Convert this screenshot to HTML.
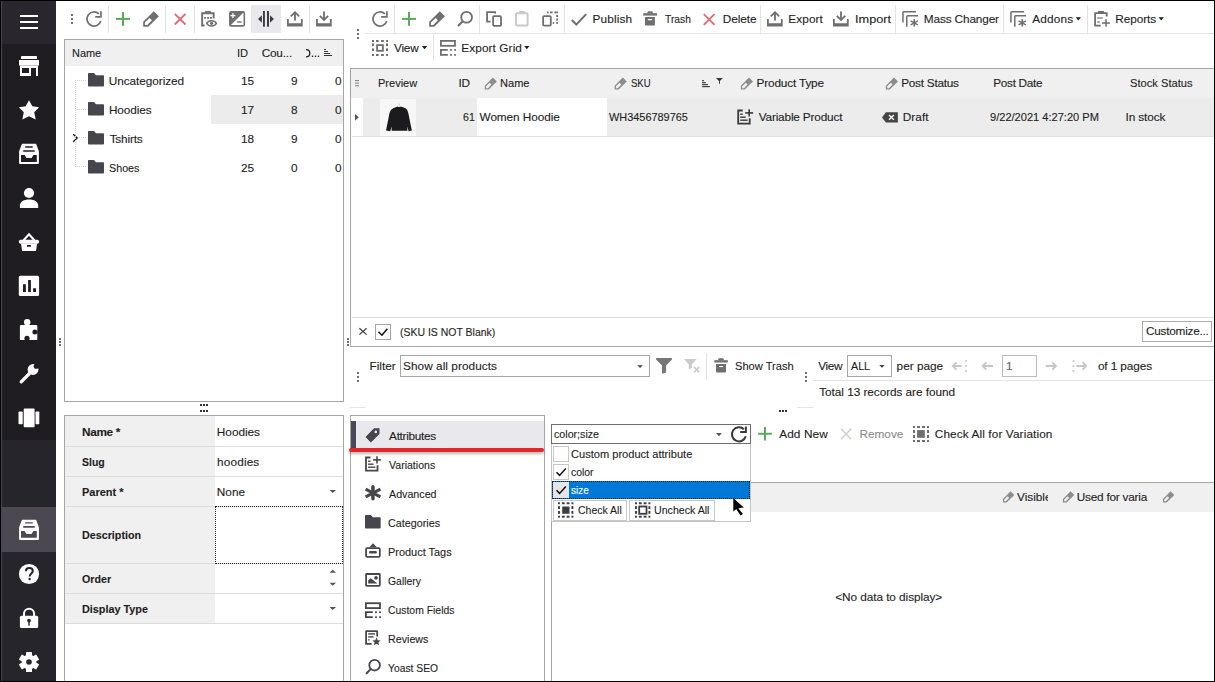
<!DOCTYPE html>
<html><head><meta charset="utf-8">
<style>
*{margin:0;padding:0;box-sizing:border-box}
html,body{width:1215px;height:682px;overflow:hidden;background:#fff}
body{position:relative;font-family:"Liberation Sans",sans-serif;font-size:11.8px;color:#1e1e1e}
.a{position:absolute}
.t{position:absolute;white-space:nowrap;line-height:12px;height:12px;-webkit-text-stroke:0.12px currentColor}
.b{font-weight:bold}
svg{position:absolute;overflow:visible}
.ic{fill:#6f6f6f}
.sb svg{fill:#fff}
</style></head><body>

<!-- SIDEBAR -->
<div class="a sb" style="left:0;top:0;width:56px;height:682px;background:#1f1d22">
  <div class="a" style="left:0;top:0;width:56px;height:44px;background:#29272d"></div>
  <div class="a" style="left:0;top:440px;width:56px;height:242px;background:#27252c"></div>
  <div class="a" style="left:0;top:507px;width:56px;height:45px;background:#4b4852"></div>
  <div class="a" style="left:0;top:0;width:1px;height:682px;background:#000"></div>
  <div class="a" style="left:1px;top:0;width:1px;height:682px;background:#4a4850"></div>
</div>

<!-- LEFT TOOLBAR -->
<div class="a" style="left:108px;top:6px;width:1px;height:27px;background:#e3e3e3"></div>
<div class="a" style="left:165px;top:6px;width:1px;height:27px;background:#e3e3e3"></div>
<div class="a" style="left:194px;top:6px;width:1px;height:27px;background:#e3e3e3"></div>
<div class="a" style="left:251px;top:5px;width:30px;height:28px;background:#e9e9ed"></div>
<div class="a" style="left:309px;top:6px;width:1px;height:27px;background:#e3e3e3"></div>

<!-- LEFT GRID -->
<div class="a" style="left:64px;top:39px;width:280px;height:363px;border:1px solid #a6a6a6"></div>
<div class="a" style="left:65px;top:40px;width:278px;height:26px;background:#f0f0f0"></div>
<div class="a" style="left:211px;top:95px;width:132px;height:29px;background:#ececec"></div>
<div class="t" style="left:71.81px;top:47px;transform:scaleX(0.926);transform-origin:0 0">Name</div>
<div class="t" style="left:236.6px;top:47px;transform:scaleX(0.943);transform-origin:0 0">ID</div>
<div class="t" style="left:261.65px;top:47px;letter-spacing:-0.18px">Cou...</div>

<div class="t" style="left:108.75px;top:75px;letter-spacing:-0.06px">Uncategorized</div>
<div class="t" style="left:108.9px;top:104px;letter-spacing:-0.09px">Hoodies</div>
<div class="t" style="left:109.65px;top:133px;letter-spacing:-0.17px">Tshirts</div>
<div class="t" style="left:109.2px;top:162px;transform:scaleX(0.911);transform-origin:0 0">Shoes</div>
<div class="t" style="left:241px;top:75px">15</div>
<div class="t" style="left:241px;top:104px">17</div>
<div class="t" style="left:241px;top:133px">18</div>
<div class="t" style="left:241px;top:162px">25</div>
<div class="t" style="left:291px;top:75px">9</div>
<div class="t" style="left:291px;top:104px">8</div>
<div class="t" style="left:291px;top:133px">9</div>
<div class="t" style="left:291px;top:162px">0</div>
<div class="t" style="left:335px;top:75px">0</div>
<div class="t" style="left:335px;top:104px">0</div>
<div class="t" style="left:335px;top:133px">0</div>
<div class="t" style="left:335px;top:162px">0</div>

<!-- FORM -->
<div class="a" style="left:64px;top:415px;width:280px;height:280px;border:1px solid #a6a6a6"></div>
<div class="a" style="left:65px;top:416px;width:150px;height:207px;background:#f0f0f0"></div>
<div class="a" style="left:65px;top:446px;width:278px;height:1px;background:#dcdcdc"></div>
<div class="a" style="left:65px;top:476px;width:278px;height:1px;background:#dcdcdc"></div>
<div class="a" style="left:65px;top:506px;width:278px;height:1px;background:#dcdcdc"></div>
<div class="a" style="left:65px;top:563px;width:278px;height:1px;background:#dcdcdc"></div>
<div class="a" style="left:65px;top:593px;width:278px;height:1px;background:#dcdcdc"></div>
<div class="a" style="left:65px;top:623px;width:278px;height:1px;background:#dcdcdc"></div>
<div class="a" style="left:215px;top:506px;width:128px;height:58px;border:1px dotted #222"></div>
<div class="t b" style="left:81.95px;top:426px;letter-spacing:-0.3px">Name *</div>
<div class="t b" style="left:82.12px;top:456px;transform:scaleX(0.889);transform-origin:0 0">Slug</div>
<div class="t b" style="left:82.0px;top:486px;transform:scaleX(0.93);transform-origin:0 0">Parent *</div>
<div class="t b" style="left:82.01px;top:529px;transform:scaleX(0.91);transform-origin:0 0">Description</div>
<div class="t b" style="left:81.89px;top:573px;transform:scaleX(0.905);transform-origin:0 0">Order</div>
<div class="t b" style="left:82.0px;top:603px;transform:scaleX(0.917);transform-origin:0 0">Display Type</div>
<div class="t" style="left:216.85px;top:426px;letter-spacing:-0.02px">Hoodies</div>
<div class="t" style="left:217.1px;top:456px;letter-spacing:0.14px">hoodies</div>
<div class="t" style="left:216.85px;top:486px;letter-spacing:-0.02px">None</div>

<!-- RIGHT TOOLBAR -->
<div class="a" style="left:365px;top:33px;width:849px;height:1px;background:#e3e3e3"></div>
<div class="a" style="left:394px;top:5px;width:1px;height:28px;background:#e3e3e3"></div>
<div class="a" style="left:479px;top:5px;width:1px;height:28px;background:#e3e3e3"></div>
<div class="a" style="left:564px;top:5px;width:1px;height:28px;background:#e3e3e3"></div>
<div class="a" style="left:760px;top:5px;width:1px;height:28px;background:#e3e3e3"></div>
<div class="a" style="left:895px;top:5px;width:1px;height:28px;background:#e3e3e3"></div>
<div class="a" style="left:1003px;top:5px;width:1px;height:28px;background:#e3e3e3"></div>
<div class="a" style="left:1087px;top:5px;width:1px;height:28px;background:#e3e3e3"></div>
<div class="a" style="left:433px;top:34px;width:1px;height:27px;background:#e3e3e3"></div>
<div class="t" style="left:592.55px;top:13px;letter-spacing:0.12px">Publish</div>
<div class="t" style="left:665.28px;top:13px;transform:scaleX(0.87);transform-origin:0 0">Trash</div>
<div class="t" style="left:722.75px;top:13px;letter-spacing:-0.08px">Delete</div>
<div class="t" style="left:788.35px;top:13px;letter-spacing:0.09px">Export</div>
<div class="t" style="left:854.73px;top:13px;transform:scaleX(1.08);transform-origin:0 0">Import</div>
<div class="t" style="left:923.75px;top:13px;letter-spacing:-0.13px">Mass Changer</div>
<div class="t" style="left:1032.35px;top:13px;letter-spacing:0.15px">Addons</div>
<div class="t" style="left:1115.35px;top:13px;letter-spacing:-0.1px">Reports</div>
<div class="t" style="left:394.0px;top:42px;letter-spacing:-0.23px">View</div>
<div class="t" style="left:461.35px;top:42px;letter-spacing:0.09px">Export Grid</div>

<!-- PRODUCT GRID -->
<div class="a" style="left:350px;top:68px;width:864px;height:279px;border:1px solid #a6a6a6;border-right:none"></div>
<div class="a" style="left:351px;top:69px;width:863px;height:29px;background:#f0f0f0"></div>
<div class="a" style="left:363px;top:98px;width:851px;height:38px;background:#ececec"></div>
<div class="a" style="left:477px;top:98px;width:130px;height:38px;background:#fff"></div>
<div class="a" style="left:352px;top:136px;width:862px;height:1px;background:#e0e0e0"></div>
<div class="t" style="left:377.61px;top:77px;transform:scaleX(0.933);transform-origin:0 0">Preview</div>
<div class="t" style="left:458.5px;top:77px;letter-spacing:-0.25px">ID</div>
<div class="t" style="left:500.41px;top:77px;transform:scaleX(0.937);transform-origin:0 0">Name</div>
<div class="t" style="left:631.28px;top:77px;transform:scaleX(0.809);transform-origin:0 0">SKU</div>
<div class="t" style="left:756.55px;top:77px;letter-spacing:-0.16px">Product Type</div>
<div class="t" style="left:901.2px;top:77px;letter-spacing:-0.25px">Post Status</div>
<div class="t" style="left:993.2px;top:77px;letter-spacing:-0.29px">Post Date</div>
<div class="t" style="left:1130.07px;top:77px;transform:scaleX(0.945);transform-origin:0 0">Stock Status</div>
<div class="t" style="left:462.55px;top:111px;transform:scaleX(0.898);transform-origin:0 0">61</div>
<div class="t" style="left:479.55px;top:111px;letter-spacing:-0.08px">Women Hoodie</div>
<div class="t" style="left:609.15px;top:111px;transform:scaleX(0.925);transform-origin:0 0">WH3456789765</div>
<div class="t" style="left:758.7px;top:111px;letter-spacing:-0.17px">Variable Product</div>
<div class="t" style="left:902.75px;top:111px;letter-spacing:0.07px">Draft</div>
<div class="t" style="left:989.72px;top:111px;transform:scaleX(0.938);transform-origin:0 0">9/22/2021 4:27:20 PM</div>
<div class="t" style="left:1125.55px;top:111px;letter-spacing:-0.12px">In stock</div>

<!-- FILTER PANEL -->
<div class="a" style="left:352px;top:317px;width:862px;height:1px;background:#e0e0e0"></div>
<div class="a" style="left:375px;top:324px;width:16px;height:16px;border:1px solid #a6a6a6;background:#fff"></div>
<div class="t" style="left:399.87px;top:326px;transform:scaleX(0.888);transform-origin:0 0">(SKU IS NOT Blank)</div>
<div class="a" style="left:1142px;top:321px;width:70px;height:21px;border:1px solid #adadad;background:#fff"></div>
<div class="t" style="left:1145.95px;top:325px;letter-spacing:-0.24px">Customize...</div>

<!-- FILTER TOOLBAR -->
<div class="t" style="left:369.55px;top:360px">Filter</div>
<div class="a" style="left:400px;top:355px;width:250px;height:22px;border:1px solid #a6a6a6"></div>
<div class="t" style="left:403.05px;top:360px;letter-spacing:0.05px">Show all products</div>
<div class="a" style="left:706px;top:353px;width:1px;height:27px;background:#e3e3e3"></div>
<div class="t" style="left:735.22px;top:360px;transform:scaleX(0.942);transform-origin:0 0">Show Trash</div>
<div class="t" style="left:818.2px;top:360px;letter-spacing:-0.3px">View</div>
<div class="a" style="left:847px;top:355px;width:45px;height:22px;border:1px solid #a6a6a6"></div>
<div class="t" style="left:850.5px;top:360px;transform:scaleX(0.906);transform-origin:0 0">ALL</div>
<div class="t" style="left:896.6px;top:360px">per page</div>
<div class="a" style="left:1002px;top:355px;width:35px;height:22px;border:1px solid #bdbdbd"></div>
<div class="t" style="left:1006px;top:360px;color:#666">1</div>
<div class="t" style="left:1097.9px;top:360px;letter-spacing:-0.1px">of 1 pages</div>
<div class="a" style="left:813px;top:380px;width:401px;height:1px;background:#e3e3e3"></div>
<div class="t" style="left:819.25px;top:386px;letter-spacing:-0.05px">Total 13 records are found</div>

<!-- NAV PANEL -->
<div class="a" style="left:350px;top:415px;width:195px;height:280px;border:1px solid #a6a6a6"></div>
<div class="a" style="left:351px;top:421px;width:193px;height:29px;background:#e9e9ed"></div>
<div class="a" style="left:351px;top:421px;width:5px;height:28px;background:#4a4955"></div>
<div class="t" style="left:389.05px;top:430px;letter-spacing:-0.29px">Attributes</div>
<div class="t" style="left:389.03px;top:459px;transform:scaleX(0.895);transform-origin:0 0">Variations</div>
<div class="t" style="left:389.04px;top:488px;transform:scaleX(0.906);transform-origin:0 0">Advanced</div>
<div class="t" style="left:388.04px;top:517px;transform:scaleX(0.912);transform-origin:0 0">Categories</div>
<div class="t" style="left:387.8px;top:546px;transform:scaleX(0.927);transform-origin:0 0">Product Tags</div>
<div class="t" style="left:388.06px;top:575px;transform:scaleX(0.884);transform-origin:0 0">Gallery</div>
<div class="t" style="left:388.06px;top:604px;transform:scaleX(0.881);transform-origin:0 0">Custom Fields</div>
<div class="t" style="left:387.82px;top:633px;transform:scaleX(0.906);transform-origin:0 0">Reviews</div>
<div class="t" style="left:388.28px;top:662px;transform:scaleX(0.874);transform-origin:0 0">Yoast SEO</div>
<div class="a" style="left:349px;top:448px;width:195px;height:4px;background:#e4262a;border-radius:2px;box-shadow:0 2px 3px rgba(0,0,0,.28)"></div>

<!-- ATTRIBUTES -->
<div class="a" style="left:551px;top:482px;width:663px;height:210px;border:1px solid #a6a6a6;border-right:none"></div>
<div class="a" style="left:552px;top:483px;width:662px;height:29px;background:#f0f0f0"></div>
<div class="t" style="left:779.15px;top:428px;letter-spacing:0.13px">Add New</div>
<div class="t" style="left:859.55px;top:428px;color:#8c8c8c;letter-spacing:-0.03px">Remove</div>
<div class="t" style="left:934.8px;top:428px;letter-spacing:0.11px">Check All for Variation</div>
<div class="t" style="left:1017px;top:491px;width:31px;overflow:hidden">Visible</div>
<div class="t" style="left:1076.75px;top:491px;letter-spacing:-0.23px">Used for varia</div>
<div class="t" style="left:835.2px;top:591px;letter-spacing:-0.06px">&lt;No data to display&gt;</div>

<!-- COMBO + POPUP -->
<div class="a" style="left:551px;top:443px;width:200px;height:79px;border:1px solid #c4c4c4;background:#fff"></div>
<div class="a" style="left:551px;top:424px;width:200px;height:20px;border:1px solid #6e6e6e;background:#fff"></div>
<div class="t" style="left:553.55px;top:428px;transform:scaleX(0.904);transform-origin:0 0">color;size</div>
<div class="a" style="left:553px;top:446px;width:16px;height:16px;border:1px solid #c8c8c8;background:#fff"></div>
<div class="a" style="left:553px;top:464px;width:16px;height:16px;border:1px solid #c8c8c8;background:#fff"></div>
<div class="t" style="left:571.18px;top:448px;transform:scaleX(0.939);transform-origin:0 0">Custom product attribute</div>
<div class="t" style="left:571.44px;top:466px;transform:scaleX(0.883);transform-origin:0 0">color</div>
<div class="a" style="left:552px;top:481px;width:198px;height:18px;background:#0078d7;border:1px dotted #222"></div>
<div class="a" style="left:553px;top:482px;width:16px;height:16px;background:#e6e6ea"></div>
<div class="t" style="left:571.45px;top:484px;color:#fff;transform:scaleX(0.849);transform-origin:0 0">size</div>
<div class="a" style="left:553px;top:500px;width:74px;height:21px;border:1px solid #c8c8c8;background:#fff"></div>
<div class="a" style="left:629px;top:500px;width:86px;height:21px;border:1px solid #c8c8c8;background:#fff"></div>
<div class="t" style="left:578.02px;top:504px;transform:scaleX(0.89);transform-origin:0 0">Check All</div>
<div class="t" style="left:654.44px;top:504px;transform:scaleX(0.9);transform-origin:0 0">Uncheck All</div>


<!-- ICON OVERLAY -->
<svg width="1215" height="682" style="left:0;top:0">
<defs>
 <g id="refresh"><path d="M12.9 2.93A7.05 7.05 0 1 0 14.78 9.94M9.2 5.8H14.9V0.3" fill="none" stroke-width="1.7"/></g>
 <g id="pencil" stroke="none"><path fill-rule="evenodd" d="M0.2 15.7V10.8L10.8 0.2L15.9 5.3L5.3 15.7ZM1.9 14V11.5L6.6 6.9L8.9 9.2L4.3 14Z"/></g>
 <g id="plus" stroke="none"><rect x="6" y="0.1" width="2" height="13.7"/><rect x="0" y="5.9" width="14" height="2"/></g>
 <g id="xmark"><path d="M0.6 0.6L11.3 11.3M11.3 0.6L0.6 11.3" fill="none" stroke-width="1.9"/></g>
 <g id="upload"><path stroke="none" d="M0 7.7V15.1H15.7V7.7H13.9V11.8H1.8V7.7Z"/><rect stroke="none" x="7.1" y="1" width="1.8" height="8.2"/><path d="M3.8 4.9L8 0.8L12.2 4.9" fill="none" stroke-width="1.8"/></g>
 <g id="download"><path stroke="none" d="M0 7.7V15.1H15.7V7.7H13.9V11.8H1.8V7.7Z"/><rect stroke="none" x="7.1" y="0" width="1.8" height="8.4"/><path d="M3.8 4.5L8 8.6L12.2 4.5" fill="none" stroke-width="1.8"/></g>
 <g id="massch"><path d="M0.75 11.6V1.6Q0.75 0.75 1.6 0.75H13.8M4.6 15.7V5.6Q4.6 4.8 5.4 4.8H15.9" fill="none" stroke-width="1.5"/><rect stroke="none" x="11.2" y="8.1" width="1.7" height="7.4"/><path d="M8.4 9.9L15.7 13.8M8.4 13.8L15.7 9.9" fill="none" stroke-width="1.4"/></g>
 <g id="exgrid"><rect x="0.9" y="0.9" width="14.1" height="4.9" fill="none" stroke-width="1.8"/><path d="M7.8 9.9H0.9V14.8H7.8" fill="none" stroke-width="1.8"/><g stroke="none"><rect x="10.1" y="9" width="1.8" height="1.8"/><rect x="14.1" y="9" width="1.8" height="1.8"/><rect x="10.1" y="14" width="1.8" height="1.8"/><rect x="14.1" y="14" width="1.8" height="1.8"/></g></g>
 <g id="varprod"><path d="M5.5 1.2H1V14.3H12.5V9" fill="none" stroke-width="1.8"/><g stroke="none"><rect x="3" y="4.2" width="2.5" height="1.4"/><rect x="3" y="7.2" width="5.5" height="1.4"/><rect x="3" y="10.2" width="7.4" height="1.4"/><rect x="11.2" y="0" width="1.6" height="7.2"/><rect x="8.1" y="2.8" width="7.8" height="1.6"/></g></g>
 <g id="folder" stroke="none"><path d="M0 0.8Q0 0 0.8 0H6L8 2.2H15.2Q16 2.2 16 3V12.7Q16 13.5 15.2 13.5H0.8Q0 13.5 0 12.7Z"/></g>
 <g id="dashsq" stroke="none"><rect x="0" y="0" width="2" height="2"/><rect x="4" y="0" width="3" height="2"/><rect x="9" y="0" width="3" height="2"/><rect x="14" y="0" width="2" height="2"/><rect x="0" y="14" width="2" height="2"/><rect x="4" y="14" width="3" height="2"/><rect x="9" y="14" width="3" height="2"/><rect x="14" y="14" width="2" height="2"/><rect x="0" y="4" width="2" height="3"/><rect x="0" y="9" width="2" height="3"/><rect x="14" y="4" width="2" height="3"/><rect x="14" y="9" width="2" height="3"/></g>
</defs>

<!-- sidebar icons -->
<g fill="#fff">
 <rect x="20" y="15" width="18" height="2"/><rect x="20" y="21" width="18" height="2"/><rect x="20" y="27" width="18" height="2"/>
 <rect x="21" y="56" width="16" height="3" rx="0.6"/>
 <path d="M19 60H39V64.8Q39 65.8 38 65.8H20Q19 65.8 19 64.8Z"/>
 <path fill-rule="evenodd" d="M20 66H38V76H36V68H31V76H20ZM22 68H29V73H22Z"/>
 <path d="M29 100.2L32.3 106.3L39.1 107.3L34.2 112.2L35.7 119.4L29 116.3L22.3 119.4L23.8 112.2L18.9 107.3L25.7 106.3Z"/>
 <path fill-rule="evenodd" d="M22 143.8H36.1L38.9 151.3V163.1Q38.9 164.1 37.9 164.1H20.1Q19.1 164.1 19.1 163.1V151.3ZM25.2 146.3H32.7V147.7H25.2ZM23.2 150.2H34.7V151.8H23.2ZM21 155.1H24.6L26.5 158.1H31.6L33.4 155.1H36.8V161.9H21Z"/>
 <circle cx="29" cy="193" r="5.1"/>
 <path d="M19.9 208.1V205.6C19.9 201.6 24 199.5 29 199.5C34 199.5 38.2 201.6 38.2 205.6V208.1Z"/>
 <path d="M23.6 240.2L29 234.2L34.4 240.2" fill="none" stroke="#fff" stroke-width="2.1"/>
 <rect x="18.8" y="239.8" width="20.3" height="3.9" rx="1.9"/>
 <path fill-rule="evenodd" d="M21 243.5H37.1L36 251H22.1ZM27 245H30.9V246.8H27Z"/>
 <path fill-rule="evenodd" d="M20.3 275.8H37.6Q39.1 275.8 39.1 277.3V294.6Q39.1 296.1 37.6 296.1H20.3Q18.8 296.1 18.8 294.6V277.3Q18.8 275.8 20.3 275.8ZM23 284.2V291.9H25.9V284.2ZM28.1 280V291.9H30.9V280ZM33.1 288.2V291.9H36V288.2Z"/>
 <rect x="19.9" y="324.9" width="17.4" height="15.2" rx="1.2"/>
 <circle cx="27.2" cy="322.3" r="3.2"/>
 <circle cx="33" cy="369.5" r="5.4"/>
 <path d="M21.2 381.8L29.5 373.5" stroke="#fff" stroke-width="3.3" stroke-linecap="round"/>
 <rect x="23.7" y="408.5" width="10.9" height="18.7" rx="1"/>
 <rect x="18.5" y="411.5" width="4.2" height="12.8" rx="0.8"/>
 <rect x="35.5" y="411.5" width="3.8" height="12.8" rx="0.8"/>
 <path fill-rule="evenodd" d="M22 519.7H36.1L38.9 527.2V539Q38.9 540 37.9 540H20.1Q19.1 540 19.1 539V527.2ZM25.2 522.2H32.7V523.6H25.2ZM23.2 526.1H34.7V527.7H23.2ZM21 531H24.6L26.5 534H31.6L33.4 531H36.8V537.8H21Z"/>
 <circle cx="29" cy="574" r="10.1"/>
 <rect x="19.9" y="615.8" width="18.3" height="12.3" rx="1.5"/>
 <path d="M24 616V613.8A5.05 5.05 0 0 1 34.1 613.8V616" fill="none" stroke="#fff" stroke-width="2"/>
 <g transform="translate(29 662)"><circle r="7.4"/><rect x="-3" y="-10" width="6" height="20" rx="0.6"/><rect x="-3" y="-10" width="6" height="20" rx="0.6" transform="rotate(60)"/><rect x="-3" y="-10" width="6" height="20" rx="0.6" transform="rotate(120)"/></g>
</g>
<g fill="#1f1d22">
 <circle cx="34.9" cy="332" r="2.5"/><rect x="36" y="331.5" width="2" height="1"/>
 <circle cx="27" cy="338.3" r="2.6"/><rect x="26.5" y="339" width="1" height="2"/>
 <circle cx="36.3" cy="366.2" r="2.6"/>
</g>
<g fill="#27252c">
 <path d="M25.9 571.2C25.9 569 27.3 568 29.3 568C31.3 568 32.8 569.2 32.8 570.9C32.8 573.4 29.6 573.6 29.6 576.6" fill="none" stroke="#27252c" stroke-width="2"/>
 <circle cx="29.6" cy="579" r="1.2"/>
 <circle cx="29" cy="620.6" r="1.9"/><rect x="28.3" y="621" width="1.4" height="4.7"/>
 <circle cx="29" cy="662" r="2.8"/>
</g>

<!-- left toolbar icons -->
<g fill="#6f6f6f" stroke="#6f6f6f">
 <g stroke="none"><rect x="71" y="14" width="2" height="2"/><rect x="71" y="18" width="2" height="2"/><rect x="71" y="22" width="2" height="2"/></g>
 <use href="#refresh" transform="translate(86 11)"/>
 <use href="#pencil" transform="translate(143 11)"/>
 <g stroke="none">
  <path d="M3.6 14.55H1.15V2.25H12.65V7.4" transform="translate(201 11)" fill="none" stroke="#6f6f6f" stroke-width="1.9"/>
  <rect x="205.7" y="11.5" width="4.6" height="1.6" fill="none" stroke="#6f6f6f" stroke-width="1.1"/>
  <rect x="204.1" y="17" width="1.8" height="1.8"/><rect x="207.1" y="17" width="1.8" height="1.8"/><rect x="210.1" y="17" width="1.8" height="1.8"/>
  <path d="M206.7 23.35C208.6 19.9 214.5 19.9 216.4 23.35C214.5 26.8 208.6 26.8 206.7 23.35Z" fill="none" stroke="#6f6f6f" stroke-width="1.5"/>
  <circle cx="211.55" cy="23.35" r="1.6"/>
 </g>
 <g stroke="none">
  <rect x="229.8" y="11.8" width="14.5" height="14.1" rx="1.5" fill="none" stroke="#6f6f6f" stroke-width="1.6"/>
  <path d="M229.8 11.8H244.3L229.8 25.9Z"/>
  <rect x="232.3" y="13.1" width="1.3" height="5" fill="#fff"/><rect x="230.45" y="14.95" width="5" height="1.3" fill="#fff"/>
  <rect x="237.1" y="21.3" width="4.6" height="1.4"/>
 </g>
 <use href="#upload" transform="translate(287 11.4)"/>
 <use href="#download" transform="translate(316 11.4)"/>
</g>
<g fill="#5aa95a"><use href="#plus" transform="translate(116 12)"/></g>
<g stroke="#df6e72" fill="none"><use href="#xmark" transform="translate(174.2 13.2)"/></g>
<g fill="#3c3b43"><rect x="263" y="11" width="1.9" height="15.7"/><rect x="267" y="11" width="2" height="15.7"/><path d="M258 19L261.9 15.3V22.7Z"/><path d="M273.9 19L270 15.3V22.7Z"/></g>

<!-- right toolbar icons -->
<g fill="#6f6f6f" stroke="#6f6f6f">
 <g stroke="none"><rect x="357" y="29" width="2" height="2"/><rect x="357" y="33" width="2" height="2"/><rect x="357" y="37" width="2" height="2"/></g>
 <use href="#refresh" transform="translate(372 11)"/>
 <use href="#pencil" transform="translate(429 11)"/>
 <circle cx="466.6" cy="17.2" r="5.4" fill="none" stroke-width="1.8"/>
 <path d="M462.2 21.8L458.6 25.4" stroke-width="2.1" stroke-linecap="round"/>
 <path d="M495.1 13.6V12.1H487.1V21.6H490.6" fill="none" stroke-width="1.8"/>
 <rect x="493.1" y="16.2" width="7.9" height="9.6" rx="1" fill="none" stroke-width="1.8"/>
 <g stroke="none">
  <rect x="543.1" y="16.2" width="7.7" height="9.4" rx="1" fill="none" stroke="#6f6f6f" stroke-width="1.8"/>
  <rect x="547" y="11.5" width="1.6" height="1.8"/><rect x="550" y="11.5" width="2.6" height="1.8"/><rect x="554.3" y="11.5" width="1.8" height="1.8"/>
  <rect x="556.2" y="11.5" width="1.8" height="1.8"/><rect x="556.2" y="15" width="1.8" height="2"/><rect x="556.2" y="18.5" width="1.8" height="2"/><rect x="556.2" y="22" width="1.8" height="1.8"/><rect x="552.8" y="22.1" width="1.4" height="1.8"/>
 </g>
 <path d="M571.8 20L576.3 24.6L586.2 14.1" fill="none" stroke-width="2.1"/>
 <g stroke="none">
  <rect x="643.2" y="13.2" width="13.8" height="2.4"/>
  <path d="M648 11.2H652.1L653.1 13.3H647Z"/>
  <path d="M645 17H654.9V24.5Q654.9 25.5 653.9 25.5H646Q645 25.5 645 24.5Z"/>
  <rect x="647.9" y="19" width="4.2" height="1.2" fill="#fff"/>
 </g>
 <use href="#upload" transform="translate(767 11.4)"/>
 <use href="#download" transform="translate(833 11.4)"/>
 <use href="#massch" transform="translate(902.2 11)"/>
 <use href="#massch" transform="translate(1010.2 11)"/>
 <g stroke="none">
  <path d="M1100.7 25.6H1095.1V13.2H1106.7V16.5" fill="none" stroke="#6f6f6f" stroke-width="1.8"/>
  <rect x="1098.1" y="11" width="5.8" height="2.3"/>
  <rect x="1097.2" y="17.4" width="5.5" height="1.2"/><rect x="1097.2" y="21.4" width="2.5" height="1.2"/>
  <rect x="1105.3" y="19.1" width="1.5" height="7.6"/><rect x="1102.1" y="22.3" width="7.8" height="1.5"/>
 </g>
 <g stroke="none">
  <rect x="372" y="40" width="2" height="2"/><rect x="376" y="40" width="2.6" height="2"/><rect x="381.1" y="40" width="2.7" height="2"/><rect x="386.1" y="40" width="1.9" height="2"/>
  <rect x="372" y="54" width="2" height="2"/><rect x="376" y="54" width="2.6" height="2"/><rect x="381.1" y="54" width="2.7" height="2"/><rect x="386.1" y="54" width="1.9" height="2"/>
  <rect x="372" y="43.5" width="2" height="2.6"/><rect x="372" y="48.4" width="2" height="2.7"/><rect x="386" y="43.5" width="2" height="2.6"/><rect x="386" y="48.4" width="2" height="2.7"/>
  <rect x="377.1" y="45.1" width="5.8" height="5.7" fill="none" stroke="#6f6f6f" stroke-width="1.8"/>
 </g>
 <use href="#exgrid" transform="translate(440 40)"/>
</g>
<g fill="#c9c9c9"><rect x="516" y="13.3" width="11.6" height="12.2" rx="1" fill="none" stroke="#c9c9c9" stroke-width="1.9"/><rect x="519.2" y="11" width="5.6" height="2.6"/></g>
<g fill="#5aa95a"><use href="#plus" transform="translate(402 12)"/></g>
<g stroke="#df6e72" fill="none"><use href="#xmark" transform="translate(703.2 13.5)"/></g>
<g fill="#1e1e1e">
 <path d="M421.8 45.9H427.2L424.5 49.2Z"/><path d="M524.2 45.9H529.4L526.8 49.2Z"/>
 <path d="M1075.7 17.3H1081L1078.35 20.6Z"/><path d="M1158.6 17.3H1163.9L1161.25 20.6Z"/>
</g>

<!-- left grid icons -->
<g fill="#47464e">
 <use href="#folder" transform="translate(88 73)"/>
 <use href="#folder" transform="translate(88 102)"/>
 <use href="#folder" transform="translate(88 131)"/>
 <use href="#folder" transform="translate(88 160)"/>
</g>
<g fill="#333"><rect x="324" y="49" width="2" height="1"/><rect x="324" y="51" width="4" height="1"/><rect x="324" y="53" width="6" height="1"/><rect x="324" y="55" width="8" height="1"/></g>
<path d="M306 49.6Q309.8 49.6 309.8 53.2Q309.8 56.8 306 56.8" fill="none" stroke="#222" stroke-width="1.3"/><g fill="#222"><rect x="311.8" y="55.6" width="1.3" height="1.4"/><rect x="314.8" y="55.6" width="1.3" height="1.4"/><rect x="317.8" y="55.6" width="1.3" height="1.4"/></g>
<path d="M73.2 134.2L77.2 138L73.2 141.8" fill="none" stroke="#111" stroke-width="1.3"/>
<g stroke="#d4d4d4" stroke-width="1" stroke-dasharray="1 1" fill="none">
 <path d="M75.5 80V167"/>
 <path d="M77 80.5H87M77 109.5H87M79 137.5H87M77 166.5H87"/>
</g>

<!-- product grid icons -->
<g fill="#8a8a8a"><rect x="355" y="80" width="4" height="1.1"/><rect x="355" y="82.6" width="4" height="1.1"/><rect x="355" y="85.2" width="4" height="1.1"/></g>
<g fill="#8c8c8c">
 <use href="#pencil" transform="translate(484.6 77.4) scale(0.77)"/>
 <use href="#pencil" transform="translate(614.5 77.4) scale(0.77)"/>
 <use href="#pencil" transform="translate(740.7 77.4) scale(0.77)"/>
 <use href="#pencil" transform="translate(885.7 77.4) scale(0.77)"/>
</g>
<g fill="#444"><rect x="702" y="80" width="1.9" height="1.2"/><rect x="702" y="82" width="3.8" height="1.2"/><rect x="702" y="84" width="5.9" height="1.2"/><rect x="702" y="86" width="7.9" height="1.2"/></g>
<path d="M716 78H722.8L719.9 81V83.8H719V81Z" fill="#333"/>
<path d="M355 114L358.8 117.3L355 120.7Z" fill="#555"/>
<rect x="380" y="99" width="36" height="37" fill="#f7f7f7"/>
<path d="M393.2 108.2L397.6 106.5Q399.3 107.6 401 106.5L405.6 108.2Q407.6 109.3 408.3 113L411.8 130.6L408.6 131.3L407.4 126.5V130.8H391.6V126.5L390.2 131.3L386 130.6L389.5 113Q390.4 109.3 393.2 108.2Z" fill="#1b1b1d"/>
<path d="M399.3 103.5V106.4" stroke="#bbb" stroke-width="0.6"/>
<g fill="#3a3a3a" stroke="#3a3a3a"><use href="#varprod" transform="translate(737.2 109.3)"/></g>
<path d="M882 117.4L885.9 112.3H897.9V122.5H885.9Z" fill="#444"/>
<path d="M889 115L893.8 119.8M893.8 115L889 119.8" stroke="#fff" stroke-width="1.4"/>

<!-- filter panel icons -->
<path d="M359.4 328.2L366.6 334.6M366.6 328.2L359.4 334.6" stroke="#3c3c3c" stroke-width="1.2"/>
<path d="M378.5 331.7L381.9 335.2L387.4 328.7" fill="none" stroke="#111" stroke-width="1.5"/>
<g fill="#6f6f6f">
 <rect x="347" y="338" width="2" height="2"/><rect x="347" y="341" width="2" height="2"/><rect x="347" y="344" width="2" height="2"/>
 <rect x="357" y="372" width="2" height="2"/><rect x="357" y="376" width="2" height="2"/><rect x="357" y="380" width="2" height="2"/>
 <rect x="805" y="372" width="2" height="2"/><rect x="805" y="376" width="2" height="2"/><rect x="805" y="380" width="2" height="2"/>
 <rect x="59" y="338" width="2" height="2"/><rect x="59" y="341" width="2" height="2"/><rect x="59" y="344" width="2" height="2"/>
</g>
<g fill="#333">
 <rect x="200" y="404" width="2" height="2"/><rect x="203" y="404" width="2" height="2"/><rect x="206" y="404" width="2" height="2"/>
 <rect x="200" y="410" width="2" height="2"/><rect x="203" y="410" width="2" height="2"/><rect x="206" y="410" width="2" height="2"/>
 <rect x="779" y="410" width="2" height="2"/><rect x="782" y="410" width="2" height="2"/><rect x="785" y="410" width="2" height="2"/>
</g>
<path d="M637.3 365.3H642.8L640.05 368Z" fill="#444"/>
<path d="M879.2 365H884.7L881.95 367.8Z" fill="#444"/>
<path d="M656.1 358.1H671.9V359.6L666.1 365.5V372.4L662 373.7V365.5L656.1 359.6Z" fill="#777"/>
<path d="M684 359.1H696.7L691.8 364.6V368.1L688.8 369.4V364.6Z" fill="#cacaca"/>
<path d="M694 367L699.2 372.3M699.2 367L694 372.3" stroke="#cacaca" stroke-width="1.6"/>
<g fill="#6f6f6f">
 <rect x="714.3" y="360.2" width="13.5" height="2.3"/>
 <path d="M718.8 358.2H723.2L724.2 360.3H717.8Z"/>
 <path d="M716 364H726V371.6Q726 372.6 725 372.6H717Q716 372.6 716 371.6Z"/>
 <rect x="719" y="366" width="4" height="1.1" fill="#fff"/>
</g>
<g stroke="#c6c6c6" stroke-width="1.9" fill="none">
 <path d="M953 366H961.5M956.5 362.3L952.8 366L956.5 369.7"/>
 <path d="M982.5 366H993M986.3 362.3L982.6 366L986.3 369.7"/>
 <path d="M1045.6 366H1056M1052.3 362.3L1056 366L1052.3 369.7"/>
 <path d="M1076.5 366H1086M1082.5 362.3L1086.2 366L1082.5 369.7"/>
</g>
<g fill="#c8c8c8"><circle cx="966" cy="361" r="1.1"/><circle cx="966" cy="366" r="1.1"/><circle cx="966" cy="371" r="1.1"/><circle cx="1073.4" cy="361" r="1.1"/><circle cx="1073.4" cy="366" r="1.1"/><circle cx="1073.4" cy="371" r="1.1"/></g>

<!-- nav icons -->
<g fill="#47464e" stroke="#47464e">
 <path stroke="none" fill-rule="evenodd" d="M374 428.2H379.5V433.9L370.9 442.5L365.5 437.1ZM375.8 430.6A1.3 1.3 0 1 0 375.8 433.2A1.3 1.3 0 1 0 375.8 430.6Z"/>
 <use href="#varprod" transform="translate(365 456.3)"/>
 <rect stroke="none" x="371.2" y="485" width="3.5" height="15.5" rx="1.7"/>
 <path d="M365.6 489.2L380.4 496.8M365.6 496.8L380.4 489.2" stroke-width="3" fill="none"/>
 <use href="#folder" transform="translate(365 515.1) scale(0.98 1)"/>
 <path stroke="none" d="M373 543.2L369.3 547.3H376.8Z"/>
 <rect x="366.1" y="548.2" width="13.7" height="8.6" rx="1" fill="none" stroke-width="1.8"/>
 <rect stroke="none" x="369.1" y="551.1" width="7.7" height="2.5" rx="0.8"/>
 <rect x="366.1" y="574" width="13.7" height="11.8" rx="0.5" fill="none" stroke-width="1.8"/>
 <path stroke="none" d="M368.2 580.3L370.7 578.2L377.5 583.5H368.2Z"/>
 <circle stroke="none" cx="376" cy="577.9" r="1.8"/>
 <use href="#exgrid" transform="translate(365 602.3)"/>
 <path d="M371.6 643.8H366.1V631.5Q366.1 631.1 366.5 631.1H376.8Q377.2 631.1 377.2 631.5V636.6" fill="none" stroke-width="1.8"/>
 <rect stroke="none" x="368.2" y="633.2" width="6.7" height="1.4"/><rect stroke="none" x="368.2" y="636.2" width="5.3" height="1.4"/><rect stroke="none" x="368.2" y="639.2" width="1.4" height="1.4"/>
 <path stroke="none" d="M376.5 637.6L377.7 640.3L380.6 640.5L378.4 642.4L379.1 645.3L376.5 643.7L373.9 645.3L374.6 642.4L372.4 640.5L375.3 640.3Z"/>
 <circle cx="374.6" cy="665.2" r="5.3" fill="none" stroke-width="1.8"/>
 <path d="M370.7 669.1L366.6 673.3" stroke-width="2" stroke-linecap="round"/>
</g>

<!-- attributes icons -->
<path d="M716 433.1H721.9L718.95 436.2Z" fill="#555"/>
<path d="M12.9 2.93A7.05 7.05 0 1 0 14.78 9.94M9.2 5.8H14.9V0.3" transform="translate(731 426.3)" fill="none" stroke="#3a3a3a" stroke-width="2"/>
<g fill="#5aa95a"><use href="#plus" transform="translate(758.1 427) scale(0.98)"/></g>
<path d="M841 428.8L851.2 439.2M851.2 428.8L841 439.2" stroke="#d0d0d0" stroke-width="1.6"/>
<g fill="#6f6f6f"><use href="#dashsq" transform="translate(913 426)"/><rect x="917.1" y="430.1" width="7.7" height="7.7"/></g>
<g fill="#8c8c8c">
 <use href="#pencil" transform="translate(1002.8 491.2) scale(0.72)"/>
 <use href="#pencil" transform="translate(1062.8 491.2) scale(0.72)"/>
 <use href="#pencil" transform="translate(1162.8 491.2) scale(0.72)"/>
</g>
<path d="M556.5 472.3L559.6 475.4L565.8 468.6" fill="none" stroke="#111" stroke-width="1.5"/>
<path d="M556.5 490.3L559.6 493.4L565.8 486.6" fill="none" stroke="#111" stroke-width="1.5"/>
<g fill="#3c3c44"><use href="#dashsq" transform="translate(558 502.3) scale(0.96)"/><rect x="562.2" y="506.5" width="7.3" height="7.3" rx="0.6"/></g>
<g fill="#3c3c44"><use href="#dashsq" transform="translate(635 502.3) scale(0.96)"/><rect x="639.2" y="506.5" width="7.3" height="7.3" fill="none" stroke="#3c3c44" stroke-width="1.8"/></g>
<path d="M733.3 498.1V511.5L736.3 508.9L740.5 515.5L742.9 514L738.3 508.2L743.8 507.6Z" fill="#000"/>

<g fill="#555">
 <path d="M329.5 490H336L332.75 493Z"/>
 <path d="M329.5 572.8H336L332.75 569.8Z"/>
 <path d="M329.5 582.7H336L332.75 585.7Z"/>
 <path d="M329.5 607H336L332.75 610Z"/>
</g>
<rect x="350" y="407" width="16" height="1" fill="#e6e6e6"/>
<rect x="797" y="407" width="17" height="1" fill="#e6e6e6"/>
</svg>

<!-- BLACK FRAME -->
<div class="a" style="left:0;top:0;width:1215px;height:1px;background:#000"></div>
<div class="a" style="left:0;top:681px;width:1215px;height:1px;background:#000"></div>
<div class="a" style="left:1214px;top:0;width:1px;height:682px;background:#000"></div>
</body></html>
